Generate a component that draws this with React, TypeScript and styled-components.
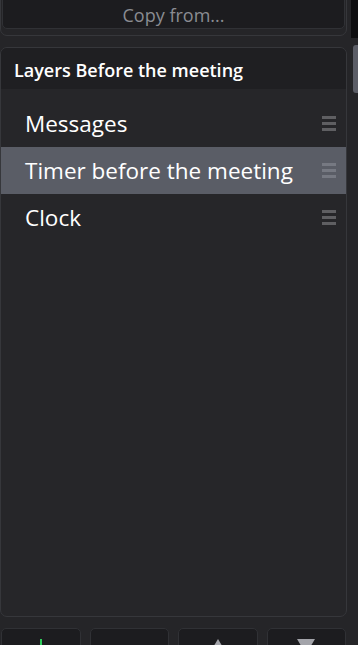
import React from "react";
import styled, { createGlobalStyle } from "styled-components";

const Global = createGlobalStyle`
  html, body { margin: 0; padding: 0; background: #252528; overflow: hidden; }
  body { font-family: "Open Sans", "Noto Sans", sans-serif; }
  * { box-sizing: border-box; }
`;

const Page = styled.div`
  width: 358px;
  height: 645px;
  display: flex;
  overflow: hidden;
  background: #252528;
`;

const Main = styled.div`
  width: 347px;
  flex-shrink: 0;
  display: flex;
  flex-direction: column;
  gap: 11px;
`;

const Side = styled.div`
  flex: 1;
  display: flex;
  flex-direction: column;
  align-items: flex-end;
`;

const TrackTop = styled.div`
  width: 7px;
  height: 38px;
  background: #0e0e10;
`;

const Thumb = styled.div`
  margin-top: 7px;
  width: 5px;
  height: 48px;
  background: #5b5d66;
  border-radius: 3px 0 0 3px;
`;

const CopyPanel = styled.div`
  flex-shrink: 0;
  margin-top: -12px;
  height: 48px;
  border: 1px solid #36373b;
  border-radius: 7px;
  padding: 1px 1px 6px 1px;
  display: flex;
`;

const CopyButton = styled.button`
  flex: 1;
  background: #1c1c1f;
  border: 1px solid #303135;
  border-radius: 5px;
  color: #8a8c92;
  font-family: "Open Sans", "Noto Sans", sans-serif;
  font-size: 18px;
  padding: 10px 0 0;
  display: flex;
  align-items: center;
  justify-content: center;
`;

const LayersPanel = styled.div`
  flex-shrink: 0;
  height: 570px;
  border: 1px solid #36373b;
  border-radius: 7px;
  background: #262629;
  display: flex;
  flex-direction: column;
  overflow: hidden;
`;

const Header = styled.div`
  height: 41px;
  background: #1f1f22;
  color: #ffffff;
  font-weight: 600;
  font-size: 18px;
  display: flex;
  align-items: center;
  padding-left: 13px;
  padding-top: 3px;
`;

const List = styled.div`
  padding-top: 11px;
  display: flex;
  flex-direction: column;
`;

const Row = styled.div<{ $selected?: boolean }>`
  height: 47px;
  display: flex;
  align-items: center;
  justify-content: space-between;
  padding: 0 10px 0 24px;
  background: ${(p) => (p.$selected ? "#5a5d66" : "transparent")};
  color: #ffffff;
  font-size: 22.5px;
`;

const Handle = styled.div<{ $selected?: boolean }>`
  width: 14px;
  display: flex;
  flex-direction: column;
  gap: 3px;
  & > span {
    display: block;
    height: 3px;
    background: ${(p) => (p.$selected ? "#767982" : "#5f5f62")};
  }
`;

const Toolbar = styled.div`
  flex-shrink: 0;
  display: grid;
  grid-template-columns: repeat(4, 1fr);
  gap: 9px;
  padding: 0 1px;
`;

const ToolButton = styled.button`
  height: 40px;
  background: #1c1c1f;
  border: 1px solid #303135;
  border-radius: 5px;
  display: flex;
  align-items: flex-start;
  justify-content: center;
  padding-top: 10px;
`;

const layers = ["Messages", "Timer before the meeting", "Clock"];

export default function App() {
  return (
    <Page>
      <Global />
      <Main>
        <CopyPanel>
          <CopyButton>Copy from...</CopyButton>
        </CopyPanel>
        <LayersPanel>
          <Header>Layers Before the meeting</Header>
          <List>
            {layers.map((l, i) => (
              <Row key={l} $selected={i === 1}>
                <span>{l}</span>
                <Handle $selected={i === 1}>
                  <span />
                  <span />
                  <span />
                </Handle>
              </Row>
            ))}
          </List>
        </LayersPanel>
        <Toolbar>
          <ToolButton>
            <svg width="20" height="20" viewBox="0 0 20 20">
              <rect x="9" y="0" width="2" height="20" fill="#2ecc5b" />
              <rect x="0" y="9" width="20" height="2" fill="#2ecc5b" />
            </svg>
          </ToolButton>
          <ToolButton>
            <svg width="18" height="20" viewBox="0 0 18 20">
              <rect x="0" y="12" width="18" height="2" fill="#e04848" />
            </svg>
          </ToolButton>
          <ToolButton>
            <svg width="18" height="15" viewBox="0 0 18 15">
              <polygon points="9,0 18,15 0,15" fill="#a3a4aa" />
            </svg>
          </ToolButton>
          <ToolButton>
            <svg width="18" height="15" viewBox="0 0 18 15">
              <polygon points="0,0 18,0 9,15" fill="#a3a4aa" />
            </svg>
          </ToolButton>
        </Toolbar>
      </Main>
      <Side>
        <TrackTop />
        <Thumb />
      </Side>
    </Page>
  );
}
